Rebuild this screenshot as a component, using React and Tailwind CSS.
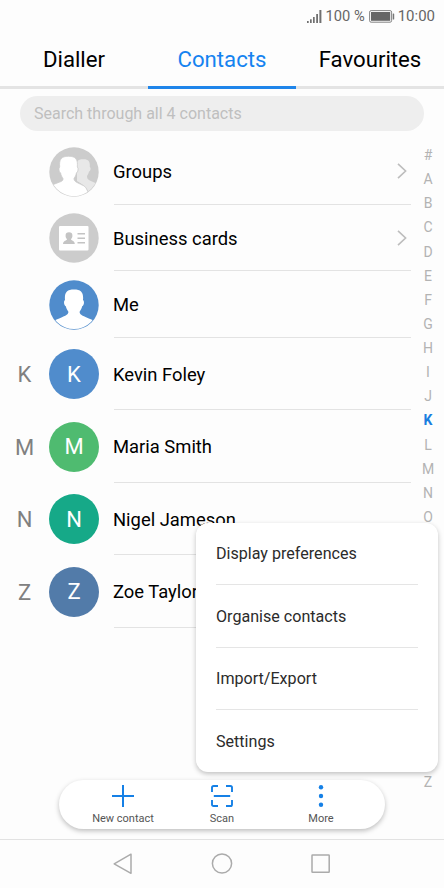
const indexLetters = '#ABCDEFGHIJKLMNOPQRSTUVWXYZ'.split('');

const contacts = [
  { letter: 'K', name: 'Kevin Foley', color: 'bg-[#508ccc]', height: 'h-[72px]' },
  { letter: 'M', name: 'Maria Smith', color: 'bg-[#4fbb70]', height: 'h-[73px]' },
  { letter: 'N', name: 'Nigel Jameson', color: 'bg-[#16a988]', height: 'h-[72px]' },
  { letter: 'Z', name: 'Zoe Taylor', color: 'bg-[#527ba9]', height: 'h-[73px]' },
];

const menuItems = ['Display preferences', 'Organise contacts', 'Import/Export', 'Settings'];

const GroupsIcon = () => (
  <svg viewBox="0 0 50 50" className="w-[50px] h-[50px]">
    <defs>
      <clipPath id="groups-clip"><circle cx="25" cy="25" r="24.2" /></clipPath>
    </defs>
    <circle cx="25" cy="25" r="24.7" fill="#cccccc" />
    <g clipPath="url(#groups-clip)">
      <path d="M28 15C29 12.5 31.5 12.2 34.5 12.2C39.5 12.2 41.2 14.5 40.8 20C42.3 21 41.5 24 40 24.5C39.6 27 38.5 28 38 29C38 33 40 33.2 48 36.5V50H40C39 41 36 39 28 34Z" fill="#e8e8e8" />
      <path d="M10.7 20C10 12.5 12 9.3 19.5 9.3C27 9.3 29 12.5 28.3 20C29.8 21 29 25.3 27.4 26C27 29 25.5 30.4 25 31.5C25 34.5 27 35 33.5 38.2C36.8 39.3 38.5 43 39.8 48V51H0V40C3 37.5 8 36.3 12 34.5C14 33.5 14 33 14 31.5C13 30 12 28.5 11.6 26C9.8 25 9.4 21 10.7 20Z" fill="#fff" stroke="#cccccc" strokeWidth="0.8" />
    </g>
  </svg>
);

const CardIcon = () => (
  <svg viewBox="0 0 50 50" className="w-[50px] h-[50px]">
    <circle cx="25" cy="25" r="24.7" fill="#cccccc" />
    <rect x="10" y="13" width="29.5" height="24.5" rx="1" fill="#fff" />
    <path d="M16.6 22.5C16.5 20 17.8 19.3 20 19.3C22.2 19.3 23.5 20 23.4 22.5C23.6 24.5 22.6 25 22 26.2C22 27.7 25.7 27.2 25.8 31H14C14.2 27.2 18 27.7 18 26.2C17.3 25 16.4 24.5 16.6 22.5Z" fill="#c4c4c4" />
    <path d="M28.5 20.8H36M28.5 25.3H36M28.5 29.8H36" stroke="#c4c4c4" strokeWidth="1.6" />
  </svg>
);

const MeIcon = () => (
  <svg viewBox="0 0 50 50" className="w-[50px] h-[50px]">
    <defs>
      <clipPath id="me-clip"><circle cx="25" cy="25" r="24.1" /></clipPath>
    </defs>
    <circle cx="25" cy="25" r="24.7" fill="#508ccc" />
    <path clipPath="url(#me-clip)" d="M16 20C15.3 12.8 17.5 9.5 25 9.5C32.5 9.5 34.7 12.8 34 20C35.7 21 35 25.5 33.2 26.2C32.7 29 31.3 30.4 30.6 31.8C30.6 34.8 33 35.3 37 37.2C41 39 44 39.5 47 42V51H3V42C6 39.5 9 39 13 37.2C17 35.3 19.4 34.8 19.4 31.8C18.7 30.4 17.3 29 16.8 26.2C15 25.5 14.3 21 16 20Z" fill="#fff" />
  </svg>
);

const shortcuts = [
  { label: 'Groups', icon: <GroupsIcon />, arrow: true, height: 'h-[67px]' },
  { label: 'Business cards', icon: <CardIcon />, arrow: true, height: 'h-[66px]' },
  { label: 'Me', icon: <MeIcon />, arrow: false, height: 'h-[67px]' },
];

const Row = ({ letter, avatar, label, arrow, height }) => (
  <div className={`flex items-center ${height}`}>
    <span className="w-[49px] pt-0.5 text-center text-[22px] leading-none text-[#808080]">{letter}</span>
    <div className="w-[65px] shrink-0">{avatar}</div>
    <div className="flex h-full flex-1 items-center justify-between border-b border-[#e3e3e3]">
      <span className="-ml-px pt-0.5 text-[18.4px] leading-6 text-black">{label}</span>
      {arrow && (
        <svg viewBox="0 0 10 16" className="mr-1 h-4 w-2.5" fill="none" stroke="#bdbdbd" strokeWidth="1.6">
          <path d="M1 0.8L8.6 8L1 15.2" />
        </svg>
      )}
    </div>
  </div>
);

const StatusBar = () => (
  <div className="flex h-8 items-center justify-end pr-[9px] text-[15px] text-[#666]">
    <svg viewBox="0 0 15 13" className="mr-[3px] h-[13px] w-[15px]" fill="#707070">
      <rect x="0" y="11" width="1.7" height="2" />
      <rect x="3" y="9.3" width="1.7" height="3.7" />
      <rect x="6" y="7" width="1.7" height="6" />
      <rect x="9.2" y="4" width="1.8" height="9" />
      <rect x="12.4" y="0" width="2" height="13" />
    </svg>
    <span className="text-[14.7px]">100 %</span>
    <svg viewBox="0 0 26 13" className="ml-1 mr-[3px] h-[13px] w-[26px]">
      <rect x="0.6" y="0.6" width="22" height="11.6" rx="1.5" fill="none" stroke="#777" strokeWidth="0.9" />
      <rect x="2" y="2" width="19.2" height="8.8" fill="#666" />
      <rect x="23.7" y="3.5" width="1.5" height="6" rx="0.6" fill="#777" />
    </svg>
    <span>10:00</span>
  </div>
);

const Tabs = () => (
  <div className="grid h-[57px] grid-cols-3 text-center text-[22.2px] leading-[55px] text-black">
    <div className="h-[57px] border-b-[3px] border-[#e4e4e4]">Dialler</div>
    <div className="h-[57px] border-b-[3px] border-[#1f85ea] text-[#1583f0]">Contacts</div>
    <div className="h-[57px] border-b-[3px] border-[#e4e4e4]">Favourites</div>
  </div>
);

const PopupMenu = () => (
  <div className="absolute left-[196px] top-[523px] h-[249px] w-[242px] rounded-xl bg-white px-5 shadow-[0_2px_5px_rgba(0,0,0,0.24)]">
    {menuItems.map((item) => (
      <div key={item} className="flex h-[62.4px] items-center border-b border-[#e5e5e5] pt-px text-[16.1px] text-[#2b2b2b] last:border-0">
        {item}
      </div>
    ))}
  </div>
);

const ActionBar = () => (
  <div className="absolute left-[59px] top-[780px] grid h-[49px] w-[326px] grid-cols-[128px_70px_128px] rounded-full bg-white text-[11px] leading-[14px] text-[#555] shadow-[0_2px_5px_rgba(0,0,0,0.25)]">
    <div className="flex flex-col items-center gap-[5px] pt-[5px]">
      <svg viewBox="0 0 22 22" className="h-[22px] w-[22px]" stroke="#1580e6" strokeWidth="2">
        <path d="M11 0V22M0 11H22" />
      </svg>
      <span>New contact</span>
    </div>
    <div className="flex flex-col items-center gap-[5px] pt-[5px]">
      <svg viewBox="0 0 22 22" className="h-[22px] w-[22px]" fill="none" stroke="#1580e6" strokeWidth="1.9">
        <path d="M1 7V2.6Q1 1 2.6 1H7M15 1H19.4Q21 1 21 2.6V7M21 15V19.4Q21 21 19.4 21H15M7 21H2.6Q1 21 1 19.4V15M2.8 11H19.2" />
      </svg>
      <span>Scan</span>
    </div>
    <div className="flex flex-col items-center gap-[5px] pt-[5px]">
      <svg viewBox="0 0 22 22" className="h-[22px] w-[22px]" fill="#1580e6">
        <circle cx="11" cy="2.2" r="2.2" />
        <circle cx="11" cy="11" r="2.2" />
        <circle cx="11" cy="19.8" r="2.2" />
      </svg>
      <span>More</span>
    </div>
  </div>
);

const NavBar = () => (
  <div className="flex h-[49px] items-center justify-center gap-[78px] border-t border-[#e2e2e2]">
    <svg viewBox="0 0 20 22" className="h-[22px] w-5" fill="none" stroke="#ababab" strokeWidth="1.5" strokeLinejoin="round">
      <path d="M18 1.2V20.3L1.2 10.8Z" />
    </svg>
    <svg viewBox="0 0 22 22" className="h-[22px] w-[22px]" fill="none" stroke="#ababab" strokeWidth="1.5">
      <circle cx="11" cy="10.5" r="9.6" />
    </svg>
    <svg viewBox="0 0 20 20" className="h-5 w-5" fill="none" stroke="#ababab" strokeWidth="1.5">
      <rect x="1" y="1" width="17.2" height="17.2" rx="0.5" />
    </svg>
  </div>
);

const App = () => {
  return (
    <div className="relative flex h-[888px] w-[444px] flex-col overflow-hidden bg-[#fdfdfd] font-['Roboto',sans-serif]">
      <StatusBar />
      <Tabs />
      <div className="mx-5 mt-[7px] flex h-[35px] shrink-0 items-center rounded-full bg-[#eeeeee] px-[14px] pt-px text-[16px] text-[#bfbfbf]">
        Search through all 4 contacts
      </div>

      <div className="flex min-h-0 flex-1">
        <div className="w-[411px] pt-[7px]">
          {shortcuts.map((item) => (
            <Row key={item.label} label={item.label} avatar={item.icon} arrow={item.arrow} height={item.height} />
          ))}
          {contacts.map((contact) => (
            <Row
              key={contact.letter}
              letter={contact.letter}
              label={contact.name}
              height={contact.height}
              avatar={
                <div className={`flex h-[50px] w-[50px] items-center justify-center rounded-full text-[22px] text-white ${contact.color}`}>
                  {contact.letter}
                </div>
              }
            />
          ))}
        </div>
        <div className="flex w-[33px] flex-col items-center pl-px pt-3 text-[14px] text-[#b3b3b3]">
          {indexLetters.map((letter) => (
            <span key={letter} className={`h-[24.13px] shrink-0 leading-[25px] ${letter === 'K' ? 'font-bold text-[#1b7ee0]' : ''}`}>
              {letter}
            </span>
          ))}
        </div>
      </div>

      <NavBar />
      <ActionBar />
      <PopupMenu />
    </div>
  );
};

export default App;
